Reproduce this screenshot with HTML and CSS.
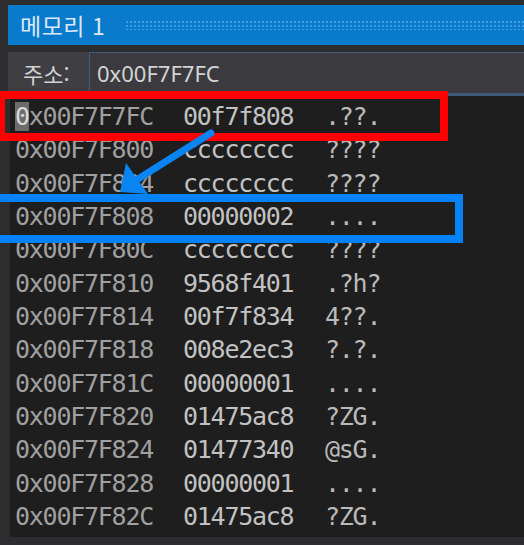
FILE: index.html
```html
<!DOCTYPE html>
<html lang="ko">
<head>
<meta charset="utf-8">
<title>메모리 1</title>
<link rel="stylesheet" href="styles.css">
</head>
<body>
<div class="frame">
  <div class="titlebar">
    <span class="title">메모리 1</span>
    <span class="grip"></span>
  </div>
  <div class="addrbar">
    <span class="addrlabel">주소:</span>
    <div class="addrinput">0x00F7F7FC</div>
  </div>
  <div class="memory">
    <div class="row"><span class="addr"><span class="cursor">0</span>x00F7F7FC</span><span class="data">00f7f808</span><span class="ascii">.??.</span></div>
    <div class="row"><span class="addr">0x00F7F800</span><span class="data">cccccccc</span><span class="ascii">????</span></div>
    <div class="row"><span class="addr">0x00F7F804</span><span class="data">cccccccc</span><span class="ascii">????</span></div>
    <div class="row"><span class="addr">0x00F7F808</span><span class="data">00000002</span><span class="ascii">....</span></div>
    <div class="row"><span class="addr">0x00F7F80C</span><span class="data">cccccccc</span><span class="ascii">????</span></div>
    <div class="row"><span class="addr">0x00F7F810</span><span class="data">9568f401</span><span class="ascii">.?h?</span></div>
    <div class="row"><span class="addr">0x00F7F814</span><span class="data">00f7f834</span><span class="ascii">4??.</span></div>
    <div class="row"><span class="addr">0x00F7F818</span><span class="data">008e2ec3</span><span class="ascii">?.?.</span></div>
    <div class="row"><span class="addr">0x00F7F81C</span><span class="data">00000001</span><span class="ascii">....</span></div>
    <div class="row"><span class="addr">0x00F7F820</span><span class="data">01475ac8</span><span class="ascii">?ZG.</span></div>
    <div class="row"><span class="addr">0x00F7F824</span><span class="data">01477340</span><span class="ascii">@sG.</span></div>
    <div class="row"><span class="addr">0x00F7F828</span><span class="data">00000001</span><span class="ascii">....</span></div>
    <div class="row"><span class="addr">0x00F7F82C</span><span class="data">01475ac8</span><span class="ascii">?ZG.</span></div>
  </div>
  <div class="box box-red"></div>
  <div class="box box-blue"></div>
  <svg class="arrow" width="524" height="545" viewBox="0 0 524 545">
    <line x1="211" y1="133" x2="138" y2="179" stroke="#0a84f0" stroke-width="7" stroke-linecap="round"/>
    <polygon points="120,192 126,163 148,194" fill="#0a84f0"/>
  </svg>
</div>
</body>
</html>
```
FILE: styles.css
```css
html, body {
  margin: 0;
  padding: 0;
  background: #2d2d30;
}
.frame {
  position: relative;
  width: 524px;
  height: 545px;
  overflow: hidden;
  background: #2d2d30;
  display: flex;
  flex-direction: column;
}
.titlebar {
  margin: 5px 0 0 8px;
  height: 40px;
  background: #0a7acc;
  display: flex;
  align-items: center;
  padding-left: 12px;
  box-sizing: border-box;
}
.title {
  font-family: "Noto Sans CJK KR", "Noto Sans", sans-serif;
  font-size: 23px;
  color: #dbe9f7;
  white-space: pre;
  letter-spacing: 0.5px;
}
.grip {
  flex: 1;
  height: 10px;
  margin-left: 20px;
  background-image: radial-gradient(circle, #3f9ee0 0.9px, transparent 1.4px);
  background-size: 4px 4px;
}
.addrbar {
  margin: 7px 0 0 8px;
  height: 41px;
  background: #3e3e43;
  border-bottom: 3px solid #3f5d7a;
  display: flex;
  align-items: stretch;
}
.addrlabel {
  width: 81px;
  padding-left: 15px;
  box-sizing: border-box;
  font-family: "Noto Sans CJK KR", "Noto Sans", sans-serif;
  font-size: 22px;
  color: #d2d2d2;
  display: flex;
  align-items: center;
}
.addrinput {
  flex: 1;
  background: #3a3a3f;
  border-top: 1px solid #3f5f80;
  border-left: 1px solid #3f5f80;
  padding-left: 7px;
  font-family: "Noto Sans", sans-serif;
  font-size: 22px;
  color: #d4d4d4;
  display: flex;
  align-items: center;
}
.memory {
  margin-left: 10px;
  height: 441px;
  background: #1e1e1e;
  padding: 4px 0 0 5px;
  box-sizing: border-box;
  font-family: "DejaVu Sans Mono", monospace;
  font-size: 25px;
  letter-spacing: -1.25px;
}
.row {
  height: 33.33px;
  display: flex;
  align-items: center;
  white-space: pre;
}
.addr {
  width: 168px;
  color: #a0a0a0;
}
.data {
  width: 142px;
  color: #c2c2c2;
}
.ascii {
  color: #bababa;
}
.cursor {
  background: #6c6c6c;
  color: #d8d8d8;
}
.box {
  position: absolute;
  box-sizing: border-box;
  border: 8px solid #ff0000;
}
.box-red {
  left: -3px;
  top: 91px;
  width: 451px;
  height: 50px;
}
.box-blue {
  left: -10px;
  top: 194px;
  width: 473px;
  height: 49px;
  border-color: #0582f5;
}
.arrow {
  position: absolute;
  left: 0;
  top: 0;
}
```
